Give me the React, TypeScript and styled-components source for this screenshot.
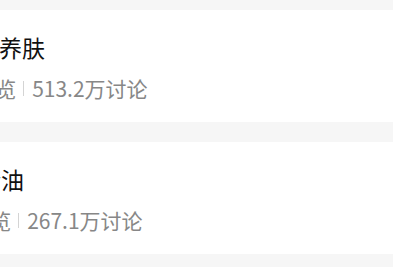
import React from "react";
import styled, { createGlobalStyle } from "styled-components";

const Global = createGlobalStyle`
  html, body { margin: 0; padding: 0; background: #f6f6f6; }
  body { font-family: "Noto Sans CJK SC", "Noto Sans", sans-serif; overflow: hidden; }
`;

const Page = styled.div`
  width: 393px;
  height: 267px;
  overflow: hidden;
  background: #f6f6f6;
  padding-top: 10px;
  box-sizing: border-box;
  display: flex;
  flex-direction: column;
  gap: 20px;
`;

const Card = styled.div`
  background: #ffffff;
  height: 112px;
  box-sizing: border-box;
  padding-top: 21px;
  display: flex;
  flex-direction: column;
  overflow: hidden;
`;

const Title = styled.div<{ $shift: number }>`
  margin-left: ${(p) => p.$shift}px;
  font-family: "Noto Sans CJK SC", sans-serif;
  font-size: 23px;
  line-height: 32px;
  color: #111111;
  white-space: nowrap;
`;

const Meta = styled.div<{ $shift: number }>`
  margin-left: ${(p) => p.$shift}px;
  margin-top: 11px;
  font-family: "Noto Sans CJK SC", sans-serif;
  font-size: 21px;
  line-height: 28px;
  color: #878787;
  white-space: nowrap;
  display: flex;
  align-items: center;
`;

const Sep = styled.span`
  display: inline-block;
  width: 1px;
  height: 15px;
  background: #d4d4d4;
  margin: 0 8px 0 7px;
`;

const items = [
  { title: "秋冬养肤", tShift: -47, views: "8.6亿浏览", mShift: -76, talk: "513.2万讨论" },
  { title: "护发精油", tShift: -68, views: "3.2亿浏览", mShift: -81, talk: "267.1万讨论" },
];

export default function App() {
  return (
    <>
      <Global />
      <Page>
        {items.map((it) => (
          <Card key={it.title}>
            <Title $shift={it.tShift}>{it.title}</Title>
            <Meta $shift={it.mShift}>
              <span>{it.views}</span>
              <Sep />
              <span>{it.talk}</span>
            </Meta>
          </Card>
        ))}
      </Page>
    </>
  );
}
